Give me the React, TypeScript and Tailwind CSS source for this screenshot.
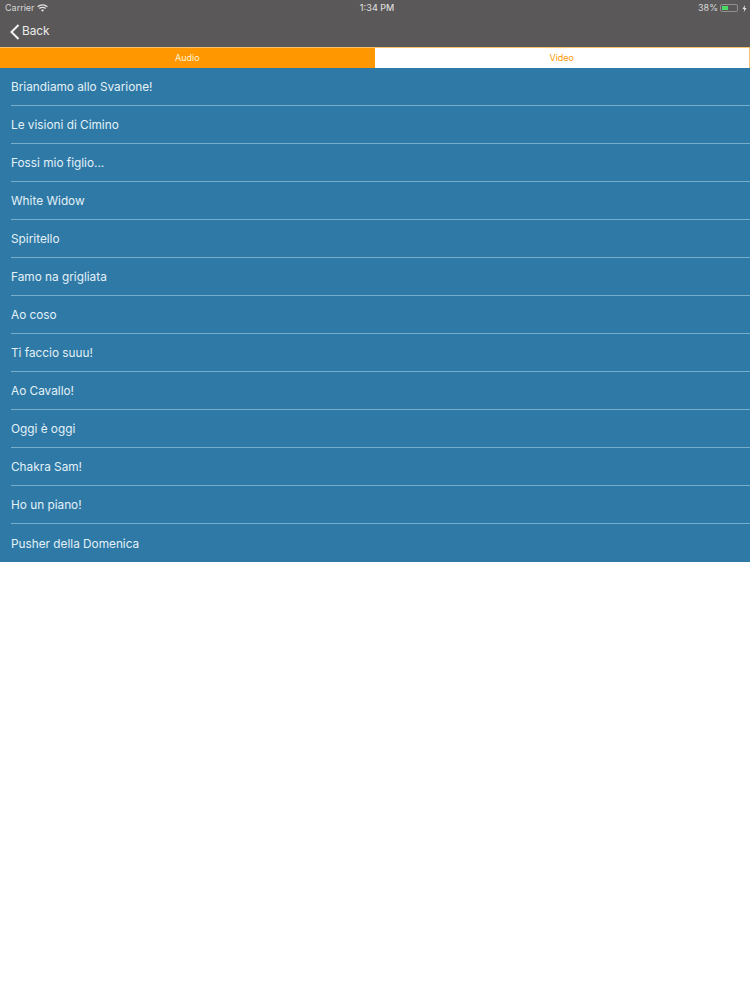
const songs = [
  'Briandiamo allo Svarione!',
  'Le visioni di Cimino',
  'Fossi mio figlio...',
  'White Widow',
  'Spiritello',
  'Famo na grigliata',
  'Ao coso',
  'Ti faccio suuu!',
  'Ao Cavallo!',
  'Oggi è oggi',
  'Chakra Sam!',
  'Ho un piano!',
  'Pusher della Domenica',
]

function StatusBar() {
  return (
    <div className="grid grid-cols-3 items-center h-[15px] pt-[1px] pl-[5px] pr-[3px] text-[9px] text-[#d8d8d8]">
      <div className="flex items-center gap-[2px]">
        <span>Carrier</span>
        <svg width="11" height="8" viewBox="0 0 11 8" fill="none" stroke="#e4e4e4" strokeWidth="1.3">
          <path d="M0.6 2.8C3.4 0.2 7.6 0.2 10.4 2.8" />
          <path d="M2.3 4.5C4 3 7 3 8.7 4.5" />
          <path d="M5.5 7.8L3.9 6C4.8 5.3 6.2 5.3 7.1 6Z" fill="#e4e4e4" stroke="none" />
        </svg>
      </div>
      <div className="text-center font-medium pl-[2px]">1:34 PM</div>
      <div className="flex items-center justify-end gap-[2px]">
        <span>38%</span>
        <div className="flex items-center w-[18px] h-[8px] p-[1px] border border-[#8f8f8f] rounded-[2px]">
          <div className="w-[6px] h-full bg-[#4cd964]" />
        </div>
        <svg width="5" height="7" viewBox="0 0 5 7" className="ml-[2px]">
          <path d="M3 0L0.5 4H2.2L1.8 7L4.5 3H2.7Z" fill="#e4e4e4" />
        </svg>
      </div>
    </div>
  )
}

export default function App() {
  return (
    <div className="min-h-[1000px] bg-white font-['Inter',sans-serif]">
      <div className="h-[47px] bg-[#5a5859]">
        <StatusBar />
        <div className="flex items-center h-[32px] pt-[1px] pl-[10px] text-[#ececec]">
          <svg width="10" height="16" viewBox="0 0 10 16" fill="none" stroke="#f2f2f2" strokeWidth="2">
            <path d="M8.5 1L1.5 8L8.5 15" />
          </svg>
          <span className="ml-[2px] mt-[1px] text-[11.8px]">Back</span>
        </div>
      </div>
      <div className="flex h-[21px] pt-[1px] text-[9px] bg-[#f5c36f]">
        <div className="flex-1 flex items-center justify-center bg-[#ff9800] text-[#fff3dc]">Audio</div>
        <div className="flex-1 flex items-center justify-center bg-white text-[#ff9800] border-r border-[#f5c36f]">Video</div>
      </div>
      <ul className="bg-[#2f79a6]">
        {songs.map((song, i) => (
          <li key={song} className="pl-[11px]">
            <div className={`flex items-center h-[38px] pt-[3px] text-[11.8px] text-[#e3f1f8] ${i < songs.length - 1 ? 'border-b border-[#79aeca]' : ''}`}>
              {song}
            </div>
          </li>
        ))}
      </ul>
    </div>
  )
}
